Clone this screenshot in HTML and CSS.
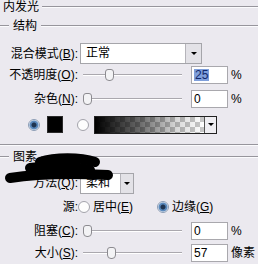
FILE: index.html
```html
<!DOCTYPE html>
<html lang="zh-CN">
<head>
  <meta charset="UTF-8">
  <meta name="viewport" content="width=device-width, initial-scale=1.0">
  <title>内发光</title>
  <link rel="stylesheet" href="styles.css">
</head>
<body>
  <div class="panel">
    <div class="title"><span>内发光</span></div>

    <div class="group-head"><span>结构</span></div>

    <div class="row row-blend">
      <label class="lbl">混合模式(<u>B</u>):</label>
      <div class="select select-wide">
        <span class="select-text">正常</span>
        <span class="select-btn"><i class="caret"></i></span>
      </div>
    </div>

    <div class="row row-opacity">
      <label class="lbl">不透明度(<u>O</u>):</label>
      <div class="slider"><span class="thumb" style="left: 23px"></span></div>
      <div class="field"><span class="sel">25</span></div>
      <span class="unit">%</span>
    </div>

    <div class="row row-noise">
      <label class="lbl">杂色(<u>N</u>):</label>
      <div class="slider"><span class="thumb" style="left: 1px"></span></div>
      <div class="field">0</div>
      <span class="unit">%</span>
    </div>

    <div class="row row-colors">
      <span class="radio on"></span>
      <span class="swatch"></span>
      <span class="radio"></span>
      <div class="gradient">
        <span class="gradient-fill"></span>
        <span class="gradient-btn"><i class="caret"></i></span>
      </div>
    </div>

    <div class="sep"></div>

    <div class="group-head"><span>图素</span></div>

    <div class="row row-method">
      <label class="lbl">方法(<u>Q</u>):</label>
      <div class="select select-short">
        <span class="select-text">柔和</span>
        <span class="select-btn"><i class="caret"></i></span>
      </div>
    </div>

    <div class="row row-source">
      <label class="lbl">源:</label>
      <span class="radio"></span>
      <span class="opt">居中(<u>E</u>)</span>
      <span class="radio on"></span>
      <span class="opt">边缘(<u>G</u>)</span>
    </div>

    <div class="row row-choke">
      <label class="lbl">阻塞(<u>C</u>):</label>
      <div class="slider"><span class="thumb" style="left: 1px"></span></div>
      <div class="field">0</div>
      <span class="unit">%</span>
    </div>

    <div class="row row-size">
      <label class="lbl">大小(<u>S</u>):</label>
      <div class="slider"><span class="thumb" style="left: 25px"></span></div>
      <div class="field">57</div>
      <span class="unit">像素</span>
    </div>

    <svg class="scribble" width="120" height="40" viewBox="0 150 120 40">
      <path d="M40 162 C55 157 80 157 95 162" />
      <path d="M30 168 C50 165 75 166 90 170" />
      <path d="M10 178 C35 174 70 173 108 175" />
    </svg>
  </div>
</body>
</html>
```

FILE: styles.css
```css
body {
  margin: 0;
  background: #ebe9ef;
  font-family: "Liberation Sans", "Noto Sans CJK SC", sans-serif;
  font-size: 12px;
  color: #000;
}
.panel {
  position: relative;
  width: 258px;
  height: 264px;
  overflow: hidden;
}
.title {
  display: flex;
  align-items: center;
  height: 14px;
  padding-left: 3px;
  line-height: 14px;
}
.title::after,
.group-head::after,
.group-head::before {
  content: "";
  border-top: 1px solid #97959c;
  border-bottom: 1px solid #fbfbfd;
}
.title::after {
  flex: 1;
  margin-left: 3px;
}
.group-head {
  display: flex;
  align-items: center;
  height: 14px;
  line-height: 14px;
  margin-top: 5px;
}
.group-head::before {
  width: 9px;
  margin-right: 4px;
}
.group-head::after {
  flex: 1;
  margin-left: 4px;
}
.sep {
  margin-top: 10px;
  border-top: 1px solid #97959c;
  border-bottom: 1px solid #fbfbfd;
}
.sep + .group-head {
  margin-top: 4px;
}
.row {
  display: flex;
  align-items: center;
  line-height: 14px;
}
.lbl {
  width: 78px;
  flex: none;
  text-align: right;
  white-space: nowrap;
}
.row-blend { margin-top: 10px; height: 21px; }
.row-opacity { margin-top: 1px; height: 20px; }
.row-noise { margin-top: 4px; height: 20px; }
.row-colors { margin-top: 6px; height: 19px; padding-left: 28px; }
.row-method { margin-top: 9px; height: 20px; }
.row-source { margin-top: 6px; height: 16px; }
.row-choke { margin-top: 6px; height: 19px; }
.row-size { margin-top: 3px; height: 19px; }

.select {
  display: flex;
  box-sizing: border-box;
  margin-left: 2px;
  height: 21px;
  background: #fff;
  border: 1px solid #a5a5aa;
}
.select-wide { width: 122px; }
.select-short { width: 54px; }
.select-text {
  flex: 1;
  padding-left: 5px;
  line-height: 19px;
}
.select-btn {
  display: flex;
  align-items: center;
  justify-content: center;
  width: 15px;
  background: #e3e2e7;
  border-left: 1px solid #b5b4ba;
}
.select-short .select-btn { width: 12px; }
.caret {
  width: 0;
  height: 0;
  border-left: 3px solid transparent;
  border-right: 3px solid transparent;
  border-top: 3px solid #000;
}

.slider {
  position: relative;
  flex: none;
  width: 100px;
  height: 14px;
  margin-left: 4px;
}
.slider::before {
  content: "";
  position: absolute;
  left: 1px;
  right: 0;
  top: 6px;
  border-top: 1px solid #aaa8ae;
  border-bottom: 1px solid #fff;
}
.thumb {
  position: absolute;
  top: 1px;
  width: 7px;
  height: 10px;
  background: #f3f3f5;
  border: 1px solid #8c8b90;
  border-radius: 3px 3px 4px 4px;
}
.field {
  box-sizing: border-box;
  width: 37px;
  height: 18px;
  margin-left: 9px;
  padding-left: 2px;
  background: #fff;
  border: 1px solid #a9a8ad;
  line-height: 16px;
}
.sel {
  display: inline-block;
  background: #7f9fdb;
  color: #13296c;
  line-height: 12px;
  padding: 0 1px;
}
.unit {
  margin-left: 3px;
}

.radio {
  box-sizing: border-box;
  flex: none;
  width: 12px;
  height: 12px;
  border-radius: 50%;
  border: 1px solid #a3a3ab;
  background: #fdfdfd;
}
.radio.on {
  border-color: #8c9db5;
  background: radial-gradient(circle, #1f3450 0 2px, #5a89bd 3px 4px, #eef2f7 5px);
}
.row-colors .swatch {
  box-sizing: border-box;
  width: 16px;
  height: 17px;
  margin-left: 7px;
  background: #000;
  border: 1px solid #2a2a2a;
}
.row-colors .radio:not(.on) {
  margin-left: 14px;
}
.gradient {
  display: flex;
  box-sizing: border-box;
  width: 123px;
  height: 18px;
  margin-left: 5px;
  border: 1px solid #222;
}
.gradient-fill {
  flex: 1;
  background:
    linear-gradient(to right, #000, rgba(0, 0, 0, 0.6) 40%, rgba(0, 0, 0, 0.15) 75%, rgba(0, 0, 0, 0)),
    conic-gradient(#c8c8c8 25%, #fff 0 50%, #c8c8c8 0 75%, #fff 0) 0 0 / 10px 10px;
}
.gradient-btn {
  display: flex;
  align-items: center;
  justify-content: center;
  width: 11px;
  background: #efeef2;
  border-left: 1px solid #555;
}

.row-source .opt {
  margin-left: 3px;
  margin-right: 24px;
}

.scribble {
  position: absolute;
  left: 0;
  top: 150px;
  fill: none;
  stroke: #000;
  stroke-width: 10;
  stroke-linecap: round;
}
```
